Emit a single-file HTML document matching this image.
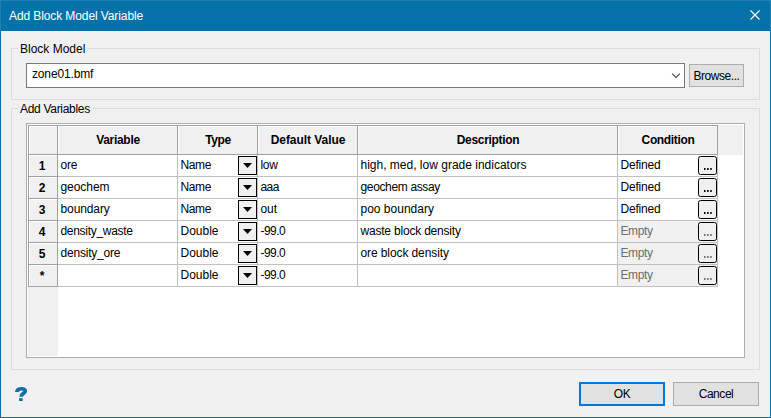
<!DOCTYPE html><html><head><meta charset="utf-8"><title>Add Block Model Variable</title><style>
html,body{margin:0;padding:0;background:#f0f0f0;}
body{width:771px;height:418px;overflow:hidden;background:#f0f0f0;font-family:"Liberation Sans",sans-serif;font-size:12px;color:#000;position:relative;}
div,span{box-sizing:border-box;}
.abs{position:absolute;}
.t{white-space:nowrap;display:inline-block;}
#win{left:0;top:31px;width:771px;height:387px;border:1px solid #0671a8;border-top:none;}
#title{left:0;top:0;width:771px;height:31px;background:#0472a8;border:1px solid #2082b4;border-bottom:none;}
#title .cap{left:8px;top:7px;color:#fff;line-height:16px;}
.gb{border:1px solid #dcdcdc;}
.leg{background:#f0f0f0;line-height:16px;padding:0 2px;}
#combo{left:26px;top:63px;width:659px;height:25px;border:1px solid #7a7a7a;background:#fff;}
#combo .v{left:5px;top:2px;line-height:16px;}
#browse{left:689px;top:64px;width:55px;height:23px;border:1px solid #adadad;background:#e1e1e1;text-align:center;line-height:22px;}
#grid{left:26px;top:123px;width:719px;height:235px;border:1px solid #abadb3;background:#fff;}
.hd{background:#f0f0f0;border-right:1px solid #a0a0a0;border-bottom:1px solid #a0a0a0;box-shadow:inset 1px 1px 0 #fff;padding:1px 0 0 1px;font-weight:bold;text-align:center;}
.hd .t{position:relative;}
.cell{border-right:1px solid #c0c0c0;border-bottom:1px solid #c0c0c0;background:#fff;line-height:16px;padding:2px 0 0 2.5px;}
.cell.dis{background:#f0f0f0;color:#6d6d6d;}
.dd{width:19px;height:19px;border:1px solid #000;background:#f0f0f0;}
.eb{width:19px;height:19px;border:1px solid #000;background:#f0f0f0;border-radius:2.5px;}
.btn{border:1px solid #adadad;background:#e1e1e1;text-align:center;}
</style></head><body>
<div id="title" class="abs"><div class="cap abs"><span class="t" style="letter-spacing:-0.100px">Add Block Model Variable</span></div>
<svg class="abs" style="left:748px;top:8px" width="13" height="13" viewBox="0 0 13 13"><path d="M1.5 1.5 L10.5 10.5 M10.5 1.5 L1.5 10.5" stroke="#fff" stroke-width="1.1" fill="none"/></svg></div>
<div id="win" class="abs"></div>
<div class="gb abs" style="left:11px;top:48px;width:749px;height:52px"></div>
<div class="leg abs" style="left:18px;top:41px"><span class="t" style="letter-spacing:0.000px">Block Model</span></div>
<div id="combo" class="abs"><div class="v abs"><span class="t" style="letter-spacing:-0.150px">zone01.bmf</span></div>
<svg class="abs" style="left:644px;top:9px" width="11" height="7" viewBox="0 0 11 7"><path d="M1.1 0.6 L5 4.5 L8.9 0.6" stroke="#404040" stroke-width="1.1" fill="none"/></svg></div>
<div id="browse" class="abs"><span class="t" style="letter-spacing:-0.450px">Browse...</span></div>
<div class="gb abs" style="left:11px;top:108px;width:749px;height:262px"></div>
<div class="leg abs" style="left:18px;top:101px"><span class="t" style="letter-spacing:-0.300px">Add Variables</span></div>
<div id="grid" class="abs">
<div class="abs" style="left:1px;top:1px;width:715px;height:30px;background:#f0f0f0"></div>
<div class="abs" style="left:1px;top:1px;width:690px;height:1px;background:#a0a0a0"></div>
<div class="abs" style="left:1px;top:1px;width:1px;height:162px;background:#a0a0a0"></div>
<div class="abs" style="left:1px;top:163px;width:30px;height:69px;background:#f0f0f0"></div>
<div class="hd abs" style="left:2px;top:2px;width:29px;height:29px;line-height:27px"></div>
<div class="hd abs" style="left:31px;top:2px;width:120px;height:29px;line-height:27px"><span class="t" style="letter-spacing:-0.300px">Variable</span></div>
<div class="hd abs" style="left:151px;top:2px;width:80px;height:29px;line-height:27px"><span class="t" style="letter-spacing:-0.450px">Type</span></div>
<div class="hd abs" style="left:231px;top:2px;width:100px;height:29px;line-height:27px"><span class="t" style="letter-spacing:-0.050px">Default Value</span></div>
<div class="hd abs" style="left:331px;top:2px;width:260px;height:29px;line-height:27px"><span class="t" style="letter-spacing:-0.300px">Description</span></div>
<div class="hd abs" style="left:591px;top:2px;width:100px;height:29px;line-height:27px"><span class="t" style="letter-spacing:-0.350px">Condition</span></div>
<div class="hd abs" style="left:2px;top:31px;width:29px;height:22px;line-height:21px;padding-right:3px"><span class="t" style="letter-spacing:0.000px">1</span></div>
<div class="cell abs" style="left:31px;top:31px;width:120px;height:22px"><span class="t" style="letter-spacing:-0.250px">ore</span></div>
<div class="cell abs" style="left:151px;top:31px;width:80px;height:22px"><span class="t" style="letter-spacing:-0.400px">Name</span></div>
<div class="cell abs" style="left:231px;top:31px;width:100px;height:22px"><span class="t" style="letter-spacing:-0.350px">low</span></div>
<div class="cell abs" style="left:331px;top:31px;width:260px;height:22px"><span class="t" style="letter-spacing:0.000px">high, med, low grade indicators</span></div>
<div class="cell c4 abs" style="left:591px;top:31px;width:100px;height:22px"><span class="t" style="letter-spacing:-0.200px">Defined</span></div>
<div class="dd abs" style="left:211px;top:32px"><svg class="abs" style="left:4px;top:6px" width="9" height="5" viewBox="0 0 9 5"><path d="M0 0 H9 L4.5 5 Z" fill="#000"/></svg></div>
<div class="eb abs" style="left:671px;top:32px"><svg class="abs" style="left:0;top:0" width="17" height="17" viewBox="0 0 17 17"><g fill="#000"><rect x="5" y="11" width="1.5" height="2"/><rect x="8.1" y="11" width="1.5" height="2"/><rect x="11.2" y="11" width="1.5" height="2"/></g></svg></div>
<div class="hd abs" style="left:2px;top:53px;width:29px;height:22px;line-height:21px;padding-right:3px"><span class="t" style="letter-spacing:0.000px">2</span></div>
<div class="cell abs" style="left:31px;top:53px;width:120px;height:22px"><span class="t" style="letter-spacing:-0.050px">geochem</span></div>
<div class="cell abs" style="left:151px;top:53px;width:80px;height:22px"><span class="t" style="letter-spacing:-0.400px">Name</span></div>
<div class="cell abs" style="left:231px;top:53px;width:100px;height:22px"><span class="t" style="letter-spacing:-0.550px">aaa</span></div>
<div class="cell abs" style="left:331px;top:53px;width:260px;height:22px"><span class="t" style="letter-spacing:-0.350px">geochem assay</span></div>
<div class="cell c4 abs" style="left:591px;top:53px;width:100px;height:22px"><span class="t" style="letter-spacing:-0.200px">Defined</span></div>
<div class="dd abs" style="left:211px;top:54px"><svg class="abs" style="left:4px;top:6px" width="9" height="5" viewBox="0 0 9 5"><path d="M0 0 H9 L4.5 5 Z" fill="#000"/></svg></div>
<div class="eb abs" style="left:671px;top:54px"><svg class="abs" style="left:0;top:0" width="17" height="17" viewBox="0 0 17 17"><g fill="#000"><rect x="5" y="11" width="1.5" height="2"/><rect x="8.1" y="11" width="1.5" height="2"/><rect x="11.2" y="11" width="1.5" height="2"/></g></svg></div>
<div class="hd abs" style="left:2px;top:75px;width:29px;height:22px;line-height:21px;padding-right:3px"><span class="t" style="letter-spacing:0.000px">3</span></div>
<div class="cell abs" style="left:31px;top:75px;width:120px;height:22px"><span class="t" style="letter-spacing:-0.100px">boundary</span></div>
<div class="cell abs" style="left:151px;top:75px;width:80px;height:22px"><span class="t" style="letter-spacing:-0.400px">Name</span></div>
<div class="cell abs" style="left:231px;top:75px;width:100px;height:22px"><span class="t" style="letter-spacing:-0.100px">out</span></div>
<div class="cell abs" style="left:331px;top:75px;width:260px;height:22px"><span class="t" style="letter-spacing:0.000px">poo boundary</span></div>
<div class="cell c4 abs" style="left:591px;top:75px;width:100px;height:22px"><span class="t" style="letter-spacing:-0.200px">Defined</span></div>
<div class="dd abs" style="left:211px;top:76px"><svg class="abs" style="left:4px;top:6px" width="9" height="5" viewBox="0 0 9 5"><path d="M0 0 H9 L4.5 5 Z" fill="#000"/></svg></div>
<div class="eb abs" style="left:671px;top:76px"><svg class="abs" style="left:0;top:0" width="17" height="17" viewBox="0 0 17 17"><g fill="#000"><rect x="5" y="11" width="1.5" height="2"/><rect x="8.1" y="11" width="1.5" height="2"/><rect x="11.2" y="11" width="1.5" height="2"/></g></svg></div>
<div class="hd abs" style="left:2px;top:97px;width:29px;height:22px;line-height:21px;padding-right:3px"><span class="t" style="letter-spacing:0.000px">4</span></div>
<div class="cell abs" style="left:31px;top:97px;width:120px;height:22px"><span class="t" style="letter-spacing:-0.300px">density_waste</span></div>
<div class="cell abs" style="left:151px;top:97px;width:80px;height:22px"><span class="t" style="letter-spacing:0.000px">Double</span></div>
<div class="cell abs" style="left:231px;top:97px;width:100px;height:22px"><span class="t" style="letter-spacing:-0.550px">-99.0</span></div>
<div class="cell abs" style="left:331px;top:97px;width:260px;height:22px"><span class="t" style="letter-spacing:-0.200px">waste block density</span></div>
<div class="cell dis c4 abs" style="left:591px;top:97px;width:100px;height:22px"><span class="t" style="letter-spacing:-0.400px">Empty</span></div>
<div class="dd abs" style="left:211px;top:98px"><svg class="abs" style="left:4px;top:6px" width="9" height="5" viewBox="0 0 9 5"><path d="M0 0 H9 L4.5 5 Z" fill="#000"/></svg></div>
<div class="eb abs" style="left:671px;top:98px"><svg class="abs" style="left:0;top:0" width="17" height="17" viewBox="0 0 17 17"><g fill="#6d6d6d"><rect x="5" y="11" width="1.5" height="2"/><rect x="8.1" y="11" width="1.5" height="2"/><rect x="11.2" y="11" width="1.5" height="2"/></g></svg></div>
<div class="hd abs" style="left:2px;top:119px;width:29px;height:22px;line-height:21px;padding-right:3px"><span class="t" style="letter-spacing:0.000px">5</span></div>
<div class="cell abs" style="left:31px;top:119px;width:120px;height:22px"><span class="t" style="letter-spacing:-0.200px">density_ore</span></div>
<div class="cell abs" style="left:151px;top:119px;width:80px;height:22px"><span class="t" style="letter-spacing:0.000px">Double</span></div>
<div class="cell abs" style="left:231px;top:119px;width:100px;height:22px"><span class="t" style="letter-spacing:-0.550px">-99.0</span></div>
<div class="cell abs" style="left:331px;top:119px;width:260px;height:22px"><span class="t" style="letter-spacing:-0.100px">ore block density</span></div>
<div class="cell dis c4 abs" style="left:591px;top:119px;width:100px;height:22px"><span class="t" style="letter-spacing:-0.400px">Empty</span></div>
<div class="dd abs" style="left:211px;top:120px"><svg class="abs" style="left:4px;top:6px" width="9" height="5" viewBox="0 0 9 5"><path d="M0 0 H9 L4.5 5 Z" fill="#000"/></svg></div>
<div class="eb abs" style="left:671px;top:120px"><svg class="abs" style="left:0;top:0" width="17" height="17" viewBox="0 0 17 17"><g fill="#6d6d6d"><rect x="5" y="11" width="1.5" height="2"/><rect x="8.1" y="11" width="1.5" height="2"/><rect x="11.2" y="11" width="1.5" height="2"/></g></svg></div>
<div class="hd abs" style="left:2px;top:141px;width:29px;height:22px;line-height:21px;padding-right:3px"><span class="t" style="letter-spacing:0.000px">*</span></div>
<div class="cell abs" style="left:31px;top:141px;width:120px;height:22px"></div>
<div class="cell abs" style="left:151px;top:141px;width:80px;height:22px"><span class="t" style="letter-spacing:0.000px">Double</span></div>
<div class="cell abs" style="left:231px;top:141px;width:100px;height:22px"><span class="t" style="letter-spacing:-0.550px">-99.0</span></div>
<div class="cell abs" style="left:331px;top:141px;width:260px;height:22px"></div>
<div class="cell dis c4 abs" style="left:591px;top:141px;width:100px;height:22px"><span class="t" style="letter-spacing:-0.400px">Empty</span></div>
<div class="dd abs" style="left:211px;top:142px"><svg class="abs" style="left:4px;top:6px" width="9" height="5" viewBox="0 0 9 5"><path d="M0 0 H9 L4.5 5 Z" fill="#000"/></svg></div>
<div class="eb abs" style="left:671px;top:142px"><svg class="abs" style="left:0;top:0" width="17" height="17" viewBox="0 0 17 17"><g fill="#6d6d6d"><rect x="5" y="11" width="1.5" height="2"/><rect x="8.1" y="11" width="1.5" height="2"/><rect x="11.2" y="11" width="1.5" height="2"/></g></svg></div>
</div>
<svg class="abs" style="left:10px;top:383px" width="24" height="22" viewBox="0 0 24 22"><path d="M6.9 8.9 C6.9 5.0 15.3 4.8 15.3 7.9 C15.3 10.5 11.1 10.3 11.1 13.8" stroke="#0d6fa8" stroke-width="3.7" fill="none"/><rect x="9" y="15.3" width="3.7" height="2.7" fill="#0d6fa8"/></svg>
<div class="abs" style="left:579px;top:382px;width:86px;height:24px;border:2px solid #0078d7;background:#e1e1e1;text-align:center;line-height:20px"><span class="t" style="letter-spacing:-0.300px">OK</span></div>
<div class="btn abs" style="left:673px;top:382px;width:86px;height:24px;line-height:22px"><span class="t" style="letter-spacing:-0.450px">Cancel</span></div>
</body></html>
